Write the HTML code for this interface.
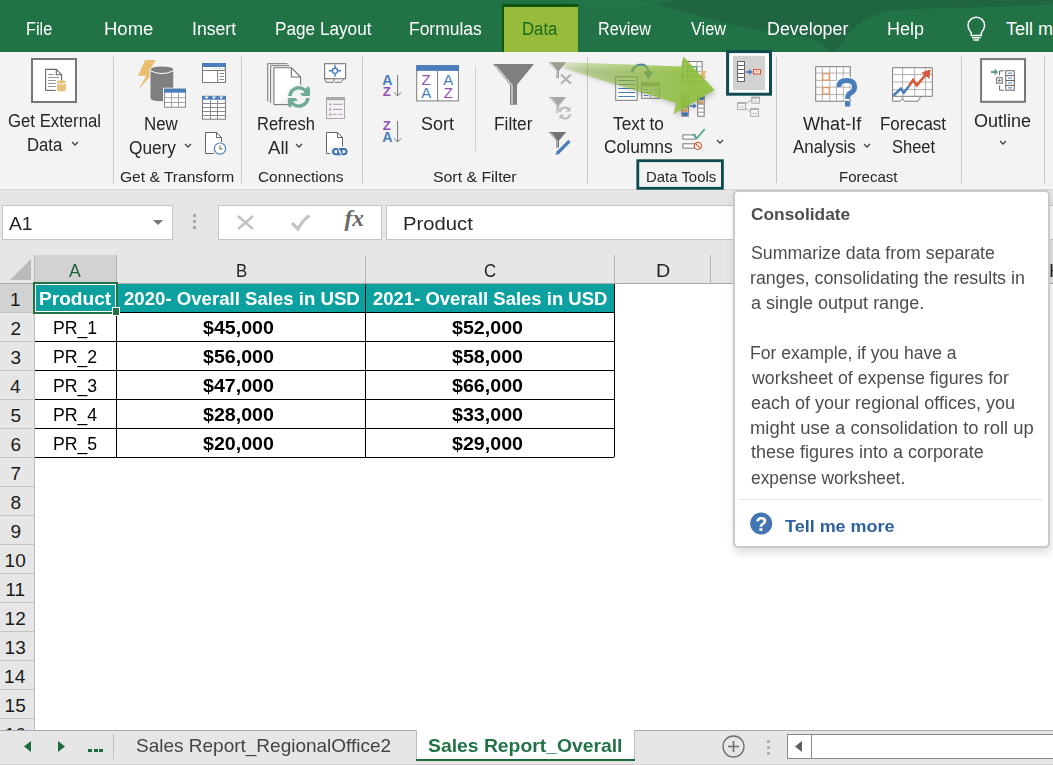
<!DOCTYPE html>
<html><head><meta charset="utf-8"><style>
html,body{margin:0;padding:0;width:1053px;height:765px;overflow:hidden;background:#fff;}
body{position:relative;font-family:"Liberation Sans",sans-serif;}
svg{overflow:visible}
</style></head><body>
<div style="position:absolute;left:0px;top:0px;width:1053px;height:52px;background:#217346"></div>
<svg style="position:absolute;left:0;top:0" width="1053" height="52"><path d="M640 0 C670 8 700 16 740 27 C780 36 815 30 830 52 L836 52 C845 35 860 16 890 11 C950 6 1000 8 1053 4 L1053 0 Z" fill="#1f6542"/><path d="M560 0 C600 12 640 8 680 0 Z" fill="#237848" opacity="0.6"/></svg>
<div style="position:absolute;left:502px;top:4px;width:76px;height:48px;background:#11560f"></div>
<div style="position:absolute;left:504px;top:7px;width:74px;height:45px;background:#97bb3b"></div>
<div style="position:absolute;left:0px;top:52px;width:1053px;height:137px;background:#f3f3f3"></div>
<div style="position:absolute;left:0px;top:188px;width:1053px;height:1px;background:#f8f8f8"></div>
<div style="position:absolute;left:0px;top:189px;width:1053px;height:1px;background:#d4d4d4"></div>
<div style="position:absolute;left:0px;top:190px;width:1053px;height:65px;background:#e6e6e6"></div>
<span style="position:absolute;left:25.60px;top:19.76px;font-size:18px;line-height:1;font-weight:normal;color:#ffffff;white-space:pre;transform-origin:0 0;transform:scaleX(0.9038);">File</span>
<span style="position:absolute;left:103.67px;top:19.76px;font-size:18px;line-height:1;font-weight:normal;color:#ffffff;white-space:pre;transform-origin:0 0;transform:scaleX(1.0276);">Home</span>
<span style="position:absolute;left:191.52px;top:19.76px;font-size:18px;line-height:1;font-weight:normal;color:#ffffff;white-space:pre;transform-origin:0 0;transform:scaleX(0.9792);">Insert</span>
<span style="position:absolute;left:274.55px;top:19.76px;font-size:18px;line-height:1;font-weight:normal;color:#ffffff;white-space:pre;transform-origin:0 0;transform:scaleX(0.9542);">Page Layout</span>
<span style="position:absolute;left:409.33px;top:19.76px;font-size:18px;line-height:1;font-weight:normal;color:#ffffff;white-space:pre;transform-origin:0 0;transform:scaleX(0.9687);">Formulas</span>
<span style="position:absolute;left:522.07px;top:19.76px;font-size:18px;line-height:1;font-weight:normal;color:#1b6a1d;white-space:pre;transform-origin:0 0;transform:scaleX(0.9313);">Data</span>
<span style="position:absolute;left:598.00px;top:19.76px;font-size:18px;line-height:1;font-weight:normal;color:#ffffff;white-space:pre;transform-origin:0 0;transform:scaleX(0.8980);">Review</span>
<span style="position:absolute;left:691.40px;top:19.76px;font-size:18px;line-height:1;font-weight:normal;color:#ffffff;white-space:pre;transform-origin:0 0;transform:scaleX(0.9045);">View</span>
<span style="position:absolute;left:766.81px;top:19.76px;font-size:18px;line-height:1;font-weight:normal;color:#ffffff;white-space:pre;transform-origin:0 0;transform:scaleX(0.9920);">Developer</span>
<span style="position:absolute;left:886.70px;top:19.76px;font-size:18px;line-height:1;font-weight:normal;color:#ffffff;white-space:pre;transform-origin:0 0;transform:scaleX(0.9998);">Help</span>
<span style="position:absolute;left:1005.90px;top:19.76px;font-size:18px;line-height:1;font-weight:normal;color:#ffffff;white-space:pre;transform-origin:0 0;transform:scaleX(1.0000);">Tell me what you want to do</span>
<span style="position:absolute;left:7.50px;top:111.76px;font-size:18px;line-height:1;font-weight:normal;color:#262626;white-space:pre;transform-origin:0 0;transform:scaleX(0.9299);">Get External</span>
<span style="position:absolute;left:27.07px;top:136.26px;font-size:18px;line-height:1;font-weight:normal;color:#262626;white-space:pre;transform-origin:0 0;transform:scaleX(0.9287);">Data</span>
<span style="position:absolute;left:143.86px;top:115.06px;font-size:18px;line-height:1;font-weight:normal;color:#262626;white-space:pre;transform-origin:0 0;transform:scaleX(0.9386);">New</span>
<span style="position:absolute;left:129.00px;top:138.86px;font-size:18px;line-height:1;font-weight:normal;color:#262626;white-space:pre;transform-origin:0 0;transform:scaleX(0.9589);">Query</span>
<span style="position:absolute;left:119.50px;top:170.03px;font-size:14.5px;line-height:1;font-weight:normal;color:#262626;white-space:pre;transform-origin:0 0;transform:scaleX(1.0746);">Get &amp; Transform</span>
<span style="position:absolute;left:257.08px;top:115.06px;font-size:18px;line-height:1;font-weight:normal;color:#262626;white-space:pre;transform-origin:0 0;transform:scaleX(0.9178);">Refresh</span>
<span style="position:absolute;left:268.40px;top:138.86px;font-size:18px;line-height:1;font-weight:normal;color:#262626;white-space:pre;transform-origin:0 0;transform:scaleX(1.0313);">All</span>
<span style="position:absolute;left:258.30px;top:170.03px;font-size:14.5px;line-height:1;font-weight:normal;color:#262626;white-space:pre;transform-origin:0 0;transform:scaleX(1.0603);">Connections</span>
<span style="position:absolute;left:421.30px;top:115.06px;font-size:18px;line-height:1;font-weight:normal;color:#262626;white-space:pre;transform-origin:0 0;transform:scaleX(0.9997);">Sort</span>
<span style="position:absolute;left:432.90px;top:170.03px;font-size:14.5px;line-height:1;font-weight:normal;color:#262626;white-space:pre;transform-origin:0 0;transform:scaleX(1.0924);">Sort &amp; Filter</span>
<span style="position:absolute;left:493.74px;top:115.06px;font-size:18px;line-height:1;font-weight:normal;color:#262626;white-space:pre;transform-origin:0 0;transform:scaleX(0.9614);">Filter</span>
<span style="position:absolute;left:612.50px;top:114.56px;font-size:18px;line-height:1;font-weight:normal;color:#262626;white-space:pre;transform-origin:0 0;transform:scaleX(0.9601);">Text to</span>
<span style="position:absolute;left:603.60px;top:138.46px;font-size:18px;line-height:1;font-weight:normal;color:#262626;white-space:pre;transform-origin:0 0;transform:scaleX(0.9673);">Columns</span>
<span style="position:absolute;left:645.77px;top:170.03px;font-size:14.5px;line-height:1;font-weight:normal;color:#262626;white-space:pre;transform-origin:0 0;transform:scaleX(1.0289);">Data Tools</span>
<span style="position:absolute;left:803.30px;top:114.56px;font-size:18px;line-height:1;font-weight:normal;color:#262626;white-space:pre;transform-origin:0 0;transform:scaleX(1.0033);">What-If</span>
<span style="position:absolute;left:792.50px;top:138.46px;font-size:18px;line-height:1;font-weight:normal;color:#262626;white-space:pre;transform-origin:0 0;transform:scaleX(0.9370);">Analysis</span>
<span style="position:absolute;left:879.86px;top:114.56px;font-size:18px;line-height:1;font-weight:normal;color:#262626;white-space:pre;transform-origin:0 0;transform:scaleX(0.9432);">Forecast</span>
<span style="position:absolute;left:891.60px;top:138.46px;font-size:18px;line-height:1;font-weight:normal;color:#262626;white-space:pre;transform-origin:0 0;transform:scaleX(0.9163);">Sheet</span>
<span style="position:absolute;left:838.56px;top:170.03px;font-size:14.5px;line-height:1;font-weight:normal;color:#262626;white-space:pre;transform-origin:0 0;transform:scaleX(1.0365);">Forecast</span>
<span style="position:absolute;left:974.00px;top:112.06px;font-size:18px;line-height:1;font-weight:normal;color:#262626;white-space:pre;transform-origin:0 0;transform:scaleX(0.9996);">Outline</span>
<svg style="position:absolute;left:71.3px;top:140.5px" width="8" height="6" viewBox="0 0 8 6"><path d="M1 1 L4 4 L7 1" stroke="#444" stroke-width="1.3" fill="none"/></svg>
<svg style="position:absolute;left:184.3px;top:143px" width="8" height="6" viewBox="0 0 8 6"><path d="M1 1 L4 4 L7 1" stroke="#444" stroke-width="1.3" fill="none"/></svg>
<svg style="position:absolute;left:295px;top:143px" width="8" height="6" viewBox="0 0 8 6"><path d="M1 1 L4 4 L7 1" stroke="#444" stroke-width="1.3" fill="none"/></svg>
<svg style="position:absolute;left:716px;top:138.5px" width="8" height="6" viewBox="0 0 8 6"><path d="M1 1 L4 4 L7 1" stroke="#444" stroke-width="1.3" fill="none"/></svg>
<svg style="position:absolute;left:863px;top:143px" width="8" height="6" viewBox="0 0 8 6"><path d="M1 1 L4 4 L7 1" stroke="#444" stroke-width="1.3" fill="none"/></svg>
<svg style="position:absolute;left:999px;top:139.5px" width="8" height="6" viewBox="0 0 8 6"><path d="M1 1 L4 4 L7 1" stroke="#444" stroke-width="1.3" fill="none"/></svg>
<div style="position:absolute;left:113px;top:57px;width:1px;height:126px;background:#c8c8c8"></div>
<div style="position:absolute;left:241px;top:57px;width:1px;height:126px;background:#c8c8c8"></div>
<div style="position:absolute;left:362px;top:57px;width:1px;height:126px;background:#c8c8c8"></div>
<div style="position:absolute;left:587px;top:57px;width:1px;height:126px;background:#c8c8c8"></div>
<div style="position:absolute;left:776px;top:57px;width:1px;height:126px;background:#c8c8c8"></div>
<div style="position:absolute;left:961px;top:57px;width:1px;height:126px;background:#c8c8c8"></div>
<div style="position:absolute;left:1044px;top:57px;width:1px;height:126px;background:#c8c8c8"></div>
<div style="position:absolute;left:475px;top:66px;width:1px;height:85px;background:#d0d0d0"></div>
<svg style="position:absolute;left:0;top:0" width="1053" height="765"><rect x="32" y="59" width="44" height="43" fill="#fff" stroke="#777" stroke-width="2"/><path d="M45.6 90.4 V69.4 H56.3 L61.6 74.7 V82" fill="none" stroke="#666" stroke-width="1.1"/><path d="M45.6 90.4 H55.6" fill="none" stroke="#666" stroke-width="1.1"/><path d="M56.3 69.4 V74.7 H61.6" fill="none" stroke="#666" stroke-width="1.1"/><path d="M48 74.5 H54 M48 77.5 H59 M48 80.5 H55.8 M48 83.5 H55.8 M48 86.5 H55.8" stroke="#888" stroke-width="0.9"/><path d="M57 81.2 Q61.4 79.2 65.9 81.2 V90.4 Q61.4 92.6 57 90.4 Z" fill="#e8c07a"/><path d="M57 83.3 Q61.4 85.2 65.9 83.3" fill="none" stroke="#fff" stroke-width="0.9"/><path d="M145.2 60.1 L155.7 60.1 L149.1 71.5 L154.6 71.5 L138.1 89.9 L146.3 75.8 L138.1 75.8 Z" fill="#e9be6f"/><path d="M150 70 Q150 66 161.9 66 Q173.8 66 173.8 70 V98 Q173.8 101.7 161.9 101.7 Q150 101.7 150 98 Z" fill="#7f7f7f" stroke="#f3f3f3" stroke-width="1"/><path d="M150 70.6 Q161.9 76.6 173.8 70.6" fill="none" stroke="#fff" stroke-width="1"/><rect x="163" y="87.7" width="24" height="21" fill="#f3f3f3"/><rect x="164.5" y="89.2" width="21" height="18" fill="#fff" stroke="#8a8a8a" stroke-width="1"/><rect x="164" y="88.7" width="22" height="4" fill="#4a7ebb"/><path d="M171.5 92.7 V107.2 M178.5 92.7 V107.2 M164.5 97.7 H185.5 M164.5 102.5 H185.5" stroke="#9a9a9a" stroke-width="0.9"/><rect x="202.5" y="63.5" width="23" height="19" fill="#fff" stroke="#7a7a7a" stroke-width="1"/><rect x="202" y="63" width="24" height="4" fill="#4a7ebb"/><path d="M202.5 70.5 H225.5 M217.6 70.5 V82.5" stroke="#7a7a7a" stroke-width="1"/><path d="M214 68.8 H215 M216.5 68.8 H217.5 M219 68.8 H220 M221.5 68.8 H222.5 M224 68.8 H225" stroke="#999" stroke-width="1"/><path d="M219.5 73.5 H224 M219.5 76.5 H224 M219.5 79.5 H224" stroke="#8a8a8a" stroke-width="1"/><rect x="202.5" y="96.4" width="23" height="22.8" fill="#fff" stroke="#7a7a7a" stroke-width="1"/><rect x="202" y="95.9" width="24" height="3.8" fill="#4a7ebb"/><path d="M204.6 96.6 h4 l-2 2.6z M211.9 96.6 h4 l-2 2.6z M219.2 96.6 h4 l-2 2.6z" fill="#fff"/><path d="M210.5 99.7 V119 M217.5 99.7 V119 M202.5 103.5 H225.5 M202.5 107.5 H225.5 M202.5 111.5 H225.5 M202.5 115.5 H225.5" stroke="#8a8a8a" stroke-width="1"/><path d="M205.5 153.5 V132.5 H216.5 L221.5 137.5 V142" fill="#fff" stroke="#666" stroke-width="1"/><path d="M205.5 153.5 H214" stroke="#666" stroke-width="1"/><path d="M216.5 132.5 V137.5 H221.5" fill="none" stroke="#666" stroke-width="1"/><circle cx="220" cy="148.6" r="5.6" fill="#fff" stroke="#4a7ebb" stroke-width="1.2"/><path d="M220 145.5 V149 H222.5" fill="none" stroke="#555" stroke-width="1"/><path d="M267.7 101.2 V63.7 H287.5" fill="none" stroke="#777" stroke-width="1"/><path d="M270.6 103 V65.7 H289.5" fill="none" stroke="#777" stroke-width="1"/><path d="M273.9 104.6 V67.8 H291.4 L300.6 77 V90 " fill="#fff" stroke="#777" stroke-width="1.1"/><path d="M273.9 104.6 H288" stroke="#777" stroke-width="1.1"/><path d="M291.4 67.8 V77 H300.6" fill="none" stroke="#777" stroke-width="1.1"/><circle cx="298.9" cy="96.9" r="12.3" fill="#f3f3f3"/><path d="M288.15 95.9 A10.8 10.8 0 0 1 305.84 88.63 L307.5 85.9 L309.9 88.3 L309.9 95.9 L302.2 95.9 L299.9 93.4 L304.8 92.4 A7.3 7.3 0 0 0 291.7 95.9 Z" fill="#6faa96"/><g transform="rotate(180 298.9 96.9)"><path d="M288.15 95.9 A10.8 10.8 0 0 1 305.84 88.63 L307.5 85.9 L309.9 88.3 L309.9 95.9 L302.2 95.9 L299.9 93.4 L304.8 92.4 A7.3 7.3 0 0 0 291.7 95.9 Z" fill="#6faa96"/></g><rect x="324.6" y="63.7" width="21" height="15" fill="#fff" stroke="#777" stroke-width="1.1"/><path d="M325 78.7 L326 82.3 H333 L334.5 78.7 M334.5 82.3 H341 L344 78.7" fill="none" stroke="#777" stroke-width="1"/><circle cx="335" cy="70.8" r="2.6" fill="#fff" stroke="#4a7ebb" stroke-width="1.4"/><path d="M329 70.8 H332.4 M337.6 70.8 H341 M335 64.8 V68.2 M335 73.4 V76.8" stroke="#4a7ebb" stroke-width="1.4"/><rect x="326.5" y="97.5" width="18" height="21" fill="#f6f1f6" stroke="#a8a8a8" stroke-width="1"/><rect x="326" y="97" width="19" height="3.2" fill="#a8a8a8"/><circle cx="330.2" cy="104.3" r="1.1" fill="#999"/><circle cx="330.2" cy="109.4" r="1.1" fill="none" stroke="#999" stroke-width="0.8"/><circle cx="330.2" cy="114.4" r="1.1" fill="none" stroke="#999" stroke-width="0.8"/><path d="M333 104.3 H342.5 M333 109.4 H342.5 M333 114.4 H336.5 M338.5 114.4 H342.5" stroke="#999" stroke-width="0.9"/><path d="M326.5 153.5 V132.5 H337.5 L342.5 137.5 V147" fill="#fff" stroke="#666" stroke-width="1"/><path d="M326.5 153.5 H330.5" stroke="#666" stroke-width="1"/><path d="M337.5 132.5 V137.5 H342.5" fill="none" stroke="#666" stroke-width="1"/><rect x="330.6" y="146.6" width="18" height="9.6" fill="#f3f3f3"/><rect x="333" y="149" width="8.6" height="5.2" rx="2.6" fill="none" stroke="#3b73b3" stroke-width="2"/><rect x="338" y="149" width="8.6" height="5.2" rx="2.6" fill="none" stroke="#3b73b3" stroke-width="2"/><path d="M337.8 147.5 L341.8 155.8" stroke="#fff" stroke-width="1"/><text x="382.3" y="84.7" font-family="Liberation Sans" font-weight="bold" font-size="14.2" fill="#4a7ebb">A</text><text x="382.8" y="95.9" font-family="Liberation Sans" font-weight="bold" font-size="13.2" fill="#8f4fb8">Z</text><text x="382.8" y="129.6" font-family="Liberation Sans" font-weight="bold" font-size="13.2" fill="#8f4fb8">Z</text><text x="382.3" y="141.9" font-family="Liberation Sans" font-weight="bold" font-size="14.2" fill="#4a7ebb">A</text><path d="M397.6 75 V96 M394 92.2 L397.6 96 L401.2 92.2" fill="none" stroke="#777" stroke-width="1"/><path d="M397.6 121 V142 M394 138.2 L397.6 142 L401.2 138.2" fill="none" stroke="#777" stroke-width="1"/><rect x="416.7" y="65.7" width="41.7" height="35.2" fill="#fff" stroke="#7a7a7a" stroke-width="1"/><rect x="416.2" y="65.2" width="42.7" height="5.7" fill="#4a7ebb"/><path d="M437.6 70.9 V101" stroke="#7a7a7a" stroke-width="1"/><text x="421.6" y="85" font-family="Liberation Sans" font-weight="normal" font-size="15" fill="#8f4fb8">Z</text><text x="421.3" y="98" font-family="Liberation Sans" font-weight="normal" font-size="15" fill="#4a7ebb">A</text><text x="443.3" y="85" font-family="Liberation Sans" font-weight="normal" font-size="15" fill="#4a7ebb">A</text><text x="443.8" y="98" font-family="Liberation Sans" font-weight="normal" font-size="15" fill="#8f4fb8">Z</text><path d="M493 63.9 H534 L517 84.8 V104.8 H510 V84.8 Z" fill="#808080"/><path d="M495.5 65.5 L512 85.3 V103.5" fill="none" stroke="#fff" stroke-width="1"/><path d="M548.8 62.2 H566.1999999999999 L559.0 70.7 V77.9 H556.0 V70.7 Z" fill="#9a9a9a"/><path d="M550.8 63.2 L557.0 71.0 V77.2" fill="none" stroke="#fff" stroke-width="0.8"/><path d="M561 74.5 L571 83.8 M571 74.5 L561 83.8" stroke="#b0b0b0" stroke-width="2"/><path d="M548.8 97 H566.1999999999999 L559.0 105.5 V112.7 H556.0 V105.5 Z" fill="#a8a8a8"/><path d="M550.8 98 L557.0 105.8 V112" fill="none" stroke="#fff" stroke-width="0.8"/><circle cx="565" cy="113" r="7" fill="#f3f3f3"/><path d="M559.8 112 A5.2 5.2 0 0 1 569 109.5 M570.2 114 A5.2 5.2 0 0 1 561 116.5" fill="none" stroke="#bdbdbd" stroke-width="2.2"/><path d="M570.5 106.5 V111.5 H565.5 Z M559.5 119.5 V114.5 H564.5 Z" fill="#bdbdbd"/><path d="M548.8 131.9 H566.1999999999999 L559.0 140.4 V147.6 H556.0 V140.4 Z" fill="#737373"/><path d="M550.8 132.9 L557.0 140.70000000000002 V146.9" fill="none" stroke="#fff" stroke-width="0.8"/><path d="M557.5 153 L569.5 141" stroke="#4a7ebb" stroke-width="3.2"/><path d="M555.5 155.2 L557 150.8 L559.7 153.5 Z" fill="#4a7ebb"/><rect x="615.7" y="76.8" width="21.5" height="23.5" fill="#fff" stroke="#7a7a7a" stroke-width="1"/><path d="M618.2 80.5 H635 M618.2 84.5 H635 M618.2 88.5 H635 M618.2 92.5 H635 M618.2 96.5 H635" stroke="#4a7ebb" stroke-width="1"/><rect x="641.7" y="82.7" width="17.6" height="15.6" fill="#fff" stroke="#7a7a7a" stroke-width="1"/><rect x="641.2" y="82.2" width="18.6" height="4.4" fill="#9a9a9a"/><path d="M650.5 86.6 V98.3 M641.7 92.3 H659.3" stroke="#9a9a9a" stroke-width="0.8"/><path d="M643.5 89.5 H648.5 M652.5 89.5 H657.5 M643.5 95.5 H648.5 M652.5 95.5 H657.5" stroke="#4a7ebb" stroke-width="0.9"/><path d="M631.5 72.5 Q634 64.8 641 64.8 Q647.5 64.8 648.5 72" fill="none" stroke="#4a7ebb" stroke-width="2.4"/><path d="M643.6 71.5 H653.3 L648.5 79.6 Z" fill="#4a7ebb"/><rect x="682.7" y="61.5" width="19.4" height="19.5" fill="#fff" stroke="#7a7a7a" stroke-width="1"/><path d="M687.5 61.5 V81 M697 61.5 V81 M682.7 66.5 H702 M682.7 71.5 H702 M682.7 76.3 H702" stroke="#a0a0a0" stroke-width="0.8"/><rect x="687.8" y="66.8" width="8.8" height="4.4" fill="none" stroke="#4aa58a" stroke-width="1"/><path d="M701.5 71 H706.5 L704.5 74.5 L706.5 78 H701.5 Z" fill="#e9b86a"/><rect x="681.8" y="95.9" width="6.5" height="20.3" fill="#fff" stroke="#7a7a7a" stroke-width="1"/><rect x="682.3" y="96.4" width="5.5" height="3.5" fill="#8cc063"/><rect x="682.3" y="100.5" width="5.5" height="3.5" fill="#d8cc5a"/><rect x="682.3" y="104.5" width="5.5" height="3.5" fill="#8cc063"/><rect x="682.3" y="108.5" width="5.5" height="3.5" fill="#e2b46e"/><rect x="682.3" y="112.3" width="5.5" height="3.6" fill="#3f72b0"/><rect x="697.7" y="95.9" width="6.5" height="20.3" fill="#fff" stroke="#7a7a7a" stroke-width="1"/><rect x="698.2" y="96.4" width="5.5" height="3.5" fill="#3f72b0"/><rect x="698.2" y="100.5" width="5.5" height="3.5" fill="#e2b46e"/><path d="M698 104.2 H704 M698 108.2 H704 M698 112.2 H704" stroke="#7a7a7a" stroke-width="0.8"/><path d="M690 106 H694.5" stroke="#4a7ebb" stroke-width="1.6"/><path d="M693.5 103.3 L696.8 106 L693.5 108.7 Z" fill="#4a7ebb"/><rect x="682.9" y="134.9" width="12.5" height="4.2" fill="#fff" stroke="#7a7a7a" stroke-width="1"/><rect x="682.9" y="143.8" width="12.5" height="4.4" fill="#fff" stroke="#7a7a7a" stroke-width="1"/><path d="M692.8 134 L696.8 138.3 L704.8 129" fill="none" stroke="#5aab8f" stroke-width="1.9"/><circle cx="697.9" cy="145.9" r="3.6" fill="#fff" stroke="#e0573a" stroke-width="1.2"/><path d="M695.5 143.5 L700.3 148.3" stroke="#e0573a" stroke-width="1.2"/><rect x="727.6" y="51.6" width="42.9" height="42.6" fill="#fff" stroke="#0f4a4e" stroke-width="3"/><rect x="732.9" y="55.8" width="32.1" height="34.2" fill="#d2d2d2"/><rect x="737.5" y="61.5" width="7" height="20" fill="#fff" stroke="#666" stroke-width="1"/><path d="M737.5 65.5 H744.5 M737.5 69.5 H744.5 M737.5 73.5 H744.5 M737.5 77.5 H744.5" stroke="#666" stroke-width="1"/><path d="M746 72 H750" stroke="#4a7ebb" stroke-width="1.8"/><path d="M749.2 68.8 L752.6 72 L749.2 75.2 Z" fill="#4a7ebb"/><rect x="753.5" y="69.7" width="7" height="4.2" fill="#fff" stroke="#d9532c" stroke-width="1.1"/><path d="M755.3 71.8 H758.7" stroke="#d9532c" stroke-width="0.7"/><path d="M745.5 104 L751.5 100 M745.5 108 L750.5 112" stroke="#b0b0b0" stroke-width="1"/><rect x="737.5" y="102.5" width="7.899999999999977" height="7.099999999999994" fill="#f6f1f6" stroke="#adadad" stroke-width="1"/><rect x="737" y="102" width="8.899999999999977" height="2" fill="#b0b0b0"/><path d="M739 107.05 H743.9" stroke="#b0b0b0" stroke-width="0.7"/><rect x="751.8" y="97.2" width="7.7000000000000455" height="6.099999999999994" fill="#f6f1f6" stroke="#adadad" stroke-width="1"/><rect x="751.3" y="96.7" width="8.700000000000045" height="2" fill="#b0b0b0"/><path d="M753.3 101.25 H758" stroke="#b0b0b0" stroke-width="0.7"/><rect x="750.7" y="108.5" width="7.7999999999999545" height="7.799999999999997" fill="#f6f1f6" stroke="#adadad" stroke-width="1"/><rect x="750.2" y="108" width="8.799999999999955" height="2" fill="#b0b0b0"/><path d="M752.2 113.4 H757" stroke="#b0b0b0" stroke-width="0.7"/><rect x="815.7" y="66.7" width="34.5" height="34.5" fill="#fff" stroke="#7a7a7a" stroke-width="1"/><path d="M822.3 66.7 V101.2 M829.8 66.7 V101.2 M836.5 66.7 V101.2 M843.3 66.7 V101.2 M815.7 73 H850.2 M815.7 80.4 H850.2 M815.7 87.2 H850.2 M815.7 94.6 H850.2" stroke="#a8a8a8" stroke-width="0.9"/><rect x="822.8" y="73.8" width="6.3" height="6.2" fill="#fff" stroke="#e8883a" stroke-width="1"/><rect x="822.8" y="87.7" width="6.3" height="6.2" fill="#fff" stroke="#e8883a" stroke-width="1"/><path d="M838.8 87 Q838.8 80.5 846.6 80.5 Q854.6 80.5 854.6 87 Q854.6 91 850.5 93 Q847.6 94.5 847.6 99" fill="none" stroke="#f3f3f3" stroke-width="8"/><path d="M838.8 87 Q838.8 80.5 846.6 80.5 Q854.6 80.5 854.6 87 Q854.6 91 850.5 93 Q847.6 94.5 847.6 99" fill="none" stroke="#4a7ebb" stroke-width="5"/><rect x="845" y="101.5" width="5.2" height="5" fill="#4a7ebb"/><path d="M892.6 67.7 H932.3 V96.3 H921 L918 101.2 H904.5 L902.6 98.5 L900.2 101.2 H892.6 Z" fill="#fff" stroke="#7a7a7a" stroke-width="1"/><path d="M892.6 96.3 H921 M902.6 96.3 V98.5" stroke="#7a7a7a" stroke-width="1"/><path d="M902.6 67.7 V96.3 M914.7 67.7 V96.3 M925.4 67.7 V96.3 M892.6 74.6 H932.3 M892.6 82 H932.3 M892.6 89.6 H932.3" stroke="#a8a8a8" stroke-width="0.9"/><path d="M893.3 95.8 L900.7 88.6 L903.8 92.7 L909 86" fill="none" stroke="#4a7ebb" stroke-width="2.6"/><path d="M909 86 L913.1 80 L916.8 85.3 L927.5 72.5" fill="none" stroke="#d6593a" stroke-width="2.6"/><path d="M930.6 69.2 L929.4 79 L921.5 72.4 Z" fill="#d6593a"/><rect x="981.1" y="59.1" width="43.9" height="42.7" fill="#fff" stroke="#777" stroke-width="2"/><path d="M991 72 H995.2" stroke="#5e9e88" stroke-width="2.2"/><path d="M994.5 68.5 L998.2 72 L994.5 75.5 Z" fill="#5e9e88"/><path d="M1003.9 70.8 H999.6 V75.5 M999.6 85.5 V90.2 H1003.9" fill="none" stroke="#666" stroke-width="1"/><rect x="996.6" y="77.8" width="5.6" height="5.4" fill="#fff" stroke="#666" stroke-width="1"/><path d="M997.8 80.5 H1001 M999.4 79 V82" stroke="#666" stroke-width="0.8"/><rect x="1005.8" y="70.7" width="8.5" height="19.5" fill="#fff" stroke="#666" stroke-width="1"/><path d="M1005.8 75.6 H1014.3 M1005.8 80.5 H1014.3 M1005.8 85.4 H1014.3" stroke="#666" stroke-width="1"/><path d="M1008 73.2 H1012.2 M1008 78.1 H1012.2 M1008 83 H1012.2 M1008 87.9 H1012.2" stroke="#4a7ebb" stroke-width="1"/><path d="M971.3 33 Q968 29 968 25.5 A8.3 8.3 0 0 1 984.6 25.5 Q984.6 29 981.3 33 V35.5 H971.3 Z" fill="none" stroke="#fff" stroke-width="1.5"/><path d="M972 37.8 H980.6 M973.5 40 H979" stroke="#fff" stroke-width="1.4"/></svg>
<svg style="position:absolute;left:0;top:0" width="1053" height="765">
<defs>
<linearGradient id="ag" x1="540" y1="0" x2="690" y2="0" gradientUnits="userSpaceOnUse">
<stop offset="0" stop-color="#8fbf3c" stop-opacity="0"/>
<stop offset="0.35" stop-color="#8fbf3c" stop-opacity="0.45"/>
<stop offset="1" stop-color="#8fc13a" stop-opacity="0.88"/>
</linearGradient>
<filter id="sh" x="-20%" y="-20%" width="140%" height="160%"><feGaussianBlur stdDeviation="2.5"/></filter>
</defs>
<path d="M560 63.5 L681.5 66.6 L683.2 56.2 L714.6 90.1 L673.5 114.2 L675.8 103.1 Z" fill="#000" opacity="0.18" transform="translate(1.5,3)" filter="url(#sh)"/>
<path d="M540 61.3 L681.5 66.6 L683.2 56.2 L714.6 90.1 L673.5 114.2 L675.8 103.1 Z" fill="url(#ag)"/>
</svg>
<svg style="position:absolute;left:0;top:0" width="1053" height="200"><rect x="637.8" y="160.7" width="84.6" height="27.6" fill="none" stroke="#0f4a4e" stroke-width="2.8"/></svg>
<div style="position:absolute;left:2px;top:205px;width:171px;height:35px;background:#fff;box-sizing:border-box;border:1px solid #c6c6c6"></div>
<span style="position:absolute;left:9.00px;top:213.92px;font-size:19px;line-height:1;font-weight:normal;color:#262626;white-space:pre;transform-origin:0 0;transform:scaleX(1.0144);">A1</span>
<svg style="position:absolute;left:153px;top:220px" width="10" height="6" viewBox="0 0 10 6"><path d="M0 0 L10 0 L5 5 Z" fill="#777"/></svg>
<div style="position:absolute;left:193px;top:213.5px;width:3px;height:3px;background:#a6a6a6"></div>
<div style="position:absolute;left:193px;top:219.5px;width:3px;height:3px;background:#a6a6a6"></div>
<div style="position:absolute;left:193px;top:225.5px;width:3px;height:3px;background:#a6a6a6"></div>
<div style="position:absolute;left:218px;top:205px;width:164px;height:35px;background:#fff;box-sizing:border-box;border:1px solid #c6c6c6"></div>
<div style="position:absolute;left:386px;top:205px;width:700px;height:35px;background:#fff;box-sizing:border-box;border:1px solid #c6c6c6"></div>
<span style="position:absolute;left:402.93px;top:213.82px;font-size:19px;line-height:1;font-weight:normal;color:#262626;white-space:pre;transform-origin:0 0;transform:scaleX(1.0659);">Product</span>
<svg style="position:absolute;left:237px;top:215px" width="17" height="15" viewBox="0 0 17 15"><path d="M1 1 L16 14 M16 1 L1 14" stroke="#c4c4c4" stroke-width="2.6" fill="none"/></svg>
<svg style="position:absolute;left:291px;top:214px" width="19" height="17" viewBox="0 0 19 17"><path d="M1 9 L7 15 Q11 7 18.5 1.5" stroke="#c4c4c4" stroke-width="3.2" fill="none"/></svg>
<span style="position:absolute;left:344.5px;top:207px;font-family:'Liberation Serif',serif;font-style:italic;font-weight:bold;font-size:23.5px;line-height:1;color:#6a6a6a">fx</span>
<div style="position:absolute;left:0px;top:255px;width:1053px;height:28px;background:#e6e6e6"></div>
<div style="position:absolute;left:34px;top:255px;width:82px;height:28px;background:#d2d2d2"></div>
<div style="position:absolute;left:0px;top:283px;width:34px;height:447px;background:#e6e6e6"></div>
<div style="position:absolute;left:0px;top:284px;width:34px;height:28px;background:#d2d2d2"></div>
<div style="position:absolute;left:0px;top:283px;width:1053px;height:1px;background:#ababab"></div>
<div style="position:absolute;left:34px;top:255px;width:1px;height:475px;background:#bdbdbd"></div>
<div style="position:absolute;left:116px;top:255px;width:1px;height:28px;background:#b4b4b4"></div>
<div style="position:absolute;left:365px;top:255px;width:1px;height:28px;background:#b4b4b4"></div>
<div style="position:absolute;left:614px;top:255px;width:1px;height:28px;background:#b4b4b4"></div>
<div style="position:absolute;left:710px;top:255px;width:1px;height:28px;background:#b4b4b4"></div>
<svg style="position:absolute;left:10px;top:259px" width="21" height="21" viewBox="0 0 21 21"><path d="M21 0 L21 21 L0 21 Z" fill="#b9b9b9"/></svg>
<div style="position:absolute;left:0px;top:312px;width:34px;height:1px;background:#c4c4c4"></div>
<div style="position:absolute;left:0px;top:341px;width:34px;height:1px;background:#c4c4c4"></div>
<div style="position:absolute;left:0px;top:370px;width:34px;height:1px;background:#c4c4c4"></div>
<div style="position:absolute;left:0px;top:399px;width:34px;height:1px;background:#c4c4c4"></div>
<div style="position:absolute;left:0px;top:428px;width:34px;height:1px;background:#c4c4c4"></div>
<div style="position:absolute;left:0px;top:457px;width:34px;height:1px;background:#c4c4c4"></div>
<div style="position:absolute;left:0px;top:486px;width:34px;height:1px;background:#c4c4c4"></div>
<div style="position:absolute;left:0px;top:515px;width:34px;height:1px;background:#c4c4c4"></div>
<div style="position:absolute;left:0px;top:544px;width:34px;height:1px;background:#c4c4c4"></div>
<div style="position:absolute;left:0px;top:573px;width:34px;height:1px;background:#c4c4c4"></div>
<div style="position:absolute;left:0px;top:602px;width:34px;height:1px;background:#c4c4c4"></div>
<div style="position:absolute;left:0px;top:631px;width:34px;height:1px;background:#c4c4c4"></div>
<div style="position:absolute;left:0px;top:660px;width:34px;height:1px;background:#c4c4c4"></div>
<div style="position:absolute;left:0px;top:689px;width:34px;height:1px;background:#c4c4c4"></div>
<div style="position:absolute;left:0px;top:718px;width:34px;height:1px;background:#c4c4c4"></div>
<div style="position:absolute;left:0px;top:747px;width:34px;height:1px;background:#c4c4c4"></div>
<span style="position:absolute;left:69.30px;top:261.94px;font-size:18.5px;line-height:1;font-weight:normal;color:#1d5e3a;white-space:pre;transform-origin:0 0;transform:scaleX(0.9538);">A</span>
<span style="position:absolute;left:235.59px;top:261.94px;font-size:18.5px;line-height:1;font-weight:normal;color:#262626;white-space:pre;transform-origin:0 0;transform:scaleX(0.9091);">B</span>
<span style="position:absolute;left:483.70px;top:261.94px;font-size:18.5px;line-height:1;font-weight:normal;color:#262626;white-space:pre;transform-origin:0 0;transform:scaleX(0.9077);">C</span>
<span style="position:absolute;left:655.93px;top:261.94px;font-size:18.5px;line-height:1;font-weight:normal;color:#262626;white-space:pre;transform-origin:0 0;transform:scaleX(1.0667);">D</span>
<span style="position:absolute;left:1048.91px;top:261.76px;font-size:18px;line-height:1;font-weight:normal;color:#262626;white-space:pre;transform-origin:0 0;transform:scaleX(1.0909);">H</span>
<span style="position:absolute;left:9.90px;top:290.02px;font-size:19px;line-height:1;font-weight:normal;color:#1a1a1a;white-space:pre;transform-origin:0 0;transform:scaleX(1.0000);">1</span>
<span style="position:absolute;left:10.40px;top:319.02px;font-size:19px;line-height:1;font-weight:normal;color:#1a1a1a;white-space:pre;transform-origin:0 0;transform:scaleX(1.0000);">2</span>
<span style="position:absolute;left:10.40px;top:348.02px;font-size:19px;line-height:1;font-weight:normal;color:#1a1a1a;white-space:pre;transform-origin:0 0;transform:scaleX(1.0000);">3</span>
<span style="position:absolute;left:9.90px;top:377.02px;font-size:19px;line-height:1;font-weight:normal;color:#1a1a1a;white-space:pre;transform-origin:0 0;transform:scaleX(1.0000);">4</span>
<span style="position:absolute;left:10.40px;top:406.02px;font-size:19px;line-height:1;font-weight:normal;color:#1a1a1a;white-space:pre;transform-origin:0 0;transform:scaleX(1.0000);">5</span>
<span style="position:absolute;left:10.40px;top:435.02px;font-size:19px;line-height:1;font-weight:normal;color:#1a1a1a;white-space:pre;transform-origin:0 0;transform:scaleX(1.0000);">6</span>
<span style="position:absolute;left:10.40px;top:464.02px;font-size:19px;line-height:1;font-weight:normal;color:#1a1a1a;white-space:pre;transform-origin:0 0;transform:scaleX(1.0000);">7</span>
<span style="position:absolute;left:10.40px;top:493.02px;font-size:19px;line-height:1;font-weight:normal;color:#1a1a1a;white-space:pre;transform-origin:0 0;transform:scaleX(1.0000);">8</span>
<span style="position:absolute;left:10.40px;top:522.02px;font-size:19px;line-height:1;font-weight:normal;color:#1a1a1a;white-space:pre;transform-origin:0 0;transform:scaleX(1.0000);">9</span>
<span style="position:absolute;left:4.62px;top:551.02px;font-size:19px;line-height:1;font-weight:normal;color:#1a1a1a;white-space:pre;transform-origin:0 0;transform:scaleX(1.0000);">10</span>
<span style="position:absolute;left:5.32px;top:580.02px;font-size:19px;line-height:1;font-weight:normal;color:#1a1a1a;white-space:pre;transform-origin:0 0;transform:scaleX(1.0000);">11</span>
<span style="position:absolute;left:4.62px;top:609.02px;font-size:19px;line-height:1;font-weight:normal;color:#1a1a1a;white-space:pre;transform-origin:0 0;transform:scaleX(1.0000);">12</span>
<span style="position:absolute;left:4.62px;top:638.02px;font-size:19px;line-height:1;font-weight:normal;color:#1a1a1a;white-space:pre;transform-origin:0 0;transform:scaleX(1.0000);">13</span>
<span style="position:absolute;left:4.12px;top:667.02px;font-size:19px;line-height:1;font-weight:normal;color:#1a1a1a;white-space:pre;transform-origin:0 0;transform:scaleX(1.0000);">14</span>
<span style="position:absolute;left:4.62px;top:696.02px;font-size:19px;line-height:1;font-weight:normal;color:#1a1a1a;white-space:pre;transform-origin:0 0;transform:scaleX(1.0000);">15</span>
<span style="position:absolute;left:4.62px;top:725.02px;font-size:19px;line-height:1;font-weight:normal;color:#1a1a1a;white-space:pre;transform-origin:0 0;transform:scaleX(1.0000);">16</span>
<div style="position:absolute;left:35px;top:284px;width:579px;height:28px;background:#0ca09f"></div>
<div style="position:absolute;left:35px;top:312px;width:579px;height:1px;background:#000"></div>
<div style="position:absolute;left:35px;top:341px;width:579px;height:1px;background:#000"></div>
<div style="position:absolute;left:35px;top:370px;width:579px;height:1px;background:#000"></div>
<div style="position:absolute;left:35px;top:399px;width:579px;height:1px;background:#000"></div>
<div style="position:absolute;left:35px;top:428px;width:579px;height:1px;background:#000"></div>
<div style="position:absolute;left:35px;top:457px;width:579px;height:1px;background:#000"></div>
<div style="position:absolute;left:116px;top:312px;width:1px;height:145px;background:#000"></div>
<div style="position:absolute;left:365px;top:312px;width:1px;height:145px;background:#000"></div>
<div style="position:absolute;left:614px;top:312px;width:1px;height:145px;background:#000"></div>
<div style="position:absolute;left:365px;top:284px;width:1px;height:28px;background:#000"></div>
<div style="position:absolute;left:614px;top:284px;width:1px;height:28px;background:#000"></div>
<div style="position:absolute;left:33px;top:282px;width:85px;height:32px;box-sizing:border-box;border:2px solid #217346"></div>
<div style="position:absolute;left:35px;top:284px;width:81px;height:28px;box-sizing:border-box;border:1px solid #fff"></div>
<div style="position:absolute;left:113px;top:308px;width:6px;height:7px;background:#217346;outline:1px solid #fff"></div>
<span style="position:absolute;left:38.84px;top:290.26px;font-size:18px;line-height:1;font-weight:bold;color:#ffffff;white-space:pre;transform-origin:0 0;transform:scaleX(1.0611);">Product</span>
<span style="position:absolute;left:123.60px;top:290.16px;font-size:18px;line-height:1;font-weight:bold;color:#ffffff;white-space:pre;transform-origin:0 0;transform:scaleX(1.0337);">2020- Overall Sales in USD</span>
<span style="position:absolute;left:373.40px;top:289.96px;font-size:18px;line-height:1;font-weight:bold;color:#ffffff;white-space:pre;transform-origin:0 0;transform:scaleX(1.0275);">2021- Overall Sales in USD</span>
<span style="position:absolute;left:53.02px;top:318.96px;font-size:18px;line-height:1;font-weight:normal;color:#000;white-space:pre;transform-origin:0 0;transform:scaleX(0.9815);">PR_1</span>
<span style="position:absolute;left:202.60px;top:318.96px;font-size:18px;line-height:1;font-weight:bold;color:#000;white-space:pre;transform-origin:0 0;transform:scaleX(1.0899);">$45,000</span>
<span style="position:absolute;left:451.80px;top:318.96px;font-size:18px;line-height:1;font-weight:bold;color:#000;white-space:pre;transform-origin:0 0;transform:scaleX(1.0914);">$52,000</span>
<span style="position:absolute;left:53.02px;top:347.96px;font-size:18px;line-height:1;font-weight:normal;color:#000;white-space:pre;transform-origin:0 0;transform:scaleX(0.9815);">PR_2</span>
<span style="position:absolute;left:202.60px;top:347.96px;font-size:18px;line-height:1;font-weight:bold;color:#000;white-space:pre;transform-origin:0 0;transform:scaleX(1.0899);">$56,000</span>
<span style="position:absolute;left:451.80px;top:347.96px;font-size:18px;line-height:1;font-weight:bold;color:#000;white-space:pre;transform-origin:0 0;transform:scaleX(1.0914);">$58,000</span>
<span style="position:absolute;left:53.02px;top:376.96px;font-size:18px;line-height:1;font-weight:normal;color:#000;white-space:pre;transform-origin:0 0;transform:scaleX(0.9815);">PR_3</span>
<span style="position:absolute;left:202.60px;top:376.96px;font-size:18px;line-height:1;font-weight:bold;color:#000;white-space:pre;transform-origin:0 0;transform:scaleX(1.0899);">$47,000</span>
<span style="position:absolute;left:451.80px;top:376.96px;font-size:18px;line-height:1;font-weight:bold;color:#000;white-space:pre;transform-origin:0 0;transform:scaleX(1.0914);">$66,000</span>
<span style="position:absolute;left:53.02px;top:405.96px;font-size:18px;line-height:1;font-weight:normal;color:#000;white-space:pre;transform-origin:0 0;transform:scaleX(0.9815);">PR_4</span>
<span style="position:absolute;left:202.60px;top:405.96px;font-size:18px;line-height:1;font-weight:bold;color:#000;white-space:pre;transform-origin:0 0;transform:scaleX(1.0899);">$28,000</span>
<span style="position:absolute;left:451.80px;top:405.96px;font-size:18px;line-height:1;font-weight:bold;color:#000;white-space:pre;transform-origin:0 0;transform:scaleX(1.0914);">$33,000</span>
<span style="position:absolute;left:53.02px;top:434.96px;font-size:18px;line-height:1;font-weight:normal;color:#000;white-space:pre;transform-origin:0 0;transform:scaleX(0.9815);">PR_5</span>
<span style="position:absolute;left:202.60px;top:434.96px;font-size:18px;line-height:1;font-weight:bold;color:#000;white-space:pre;transform-origin:0 0;transform:scaleX(1.0899);">$20,000</span>
<span style="position:absolute;left:451.80px;top:434.96px;font-size:18px;line-height:1;font-weight:bold;color:#000;white-space:pre;transform-origin:0 0;transform:scaleX(1.0914);">$29,000</span>
<div style="position:absolute;left:0px;top:730px;width:1053px;height:35px;background:#e6e6e6"></div>
<div style="position:absolute;left:0px;top:730px;width:1053px;height:1px;background:#ababab"></div>
<div style="position:absolute;left:0px;top:764px;width:1053px;height:1px;background:#d0d0d0"></div>
<svg style="position:absolute;left:24px;top:741px" width="7" height="11" viewBox="0 0 7 11"><path d="M7 0 L0 5.5 L7 11 Z" fill="#1d6b3c"/></svg>
<svg style="position:absolute;left:58px;top:741px" width="7" height="11" viewBox="0 0 7 11"><path d="M0 0 L7 5.5 L0 11 Z" fill="#1d6b3c"/></svg>
<div style="position:absolute;left:88px;top:748.5px;width:4px;height:3.6px;background:#1d6b3c"></div>
<div style="position:absolute;left:93.5px;top:748.5px;width:4px;height:3.6px;background:#1d6b3c"></div>
<div style="position:absolute;left:99px;top:748.5px;width:4px;height:3.6px;background:#1d6b3c"></div>
<div style="position:absolute;left:113px;top:734px;width:1px;height:25px;background:#bdbdbd"></div>
<span style="position:absolute;left:136.20px;top:736.02px;font-size:19px;line-height:1;font-weight:normal;color:#444;white-space:pre;transform-origin:0 0;transform:scaleX(0.9997);">Sales Report_RegionalOffice2</span>
<div style="position:absolute;left:416px;top:730px;width:219px;height:29px;background:#fff;box-sizing:border-box;border-left:1px solid #bdbdbd;border-right:1px solid #bdbdbd"></div>
<div style="position:absolute;left:416px;top:759px;width:219px;height:2px;background:#1d6b3c"></div>
<span style="position:absolute;left:428.40px;top:735.92px;font-size:19px;line-height:1;font-weight:bold;color:#217346;white-space:pre;transform-origin:0 0;transform:scaleX(1.0175);">Sales Report_Overall</span>
<svg style="position:absolute;left:722px;top:735px" width="23" height="23" viewBox="0 0 23 23"><circle cx="11.5" cy="11.5" r="10.5" stroke="#6d6d6d" stroke-width="1.3" fill="none"/><path d="M11.5 6 V17 M6 11.5 H17" stroke="#6d6d6d" stroke-width="1.6"/></svg>
<div style="position:absolute;left:767px;top:740px;width:3px;height:3px;background:#b0b0b0"></div>
<div style="position:absolute;left:767px;top:746px;width:3px;height:3px;background:#b0b0b0"></div>
<div style="position:absolute;left:767px;top:752px;width:3px;height:3px;background:#b0b0b0"></div>
<div style="position:absolute;left:787px;top:734px;width:300px;height:25px;background:#fff;box-sizing:border-box;border:1px solid #8a8a8a"></div>
<div style="position:absolute;left:811px;top:734px;width:1px;height:25px;background:#8a8a8a"></div>
<svg style="position:absolute;left:795px;top:741px" width="7" height="11" viewBox="0 0 7 11"><path d="M7 0 L0 5.5 L7 11 Z" fill="#606060"/></svg>
<div style="position:absolute;left:733px;top:190px;width:317px;height:358px;box-sizing:border-box;border:2px solid #c9c9c9;border-radius:5px;background:#fff;box-shadow:1px 5px 8px rgba(0,0,0,0.13)"></div>
<span style="position:absolute;left:750.60px;top:205.53px;font-size:16.5px;line-height:1;font-weight:bold;color:#4d4d4d;white-space:pre;transform-origin:0 0;transform:scaleX(1.0504);">Consolidate</span>
<span style="position:absolute;left:750.60px;top:245.39px;font-size:17.5px;line-height:1;font-weight:normal;color:#4d4d4d;white-space:pre;transform-origin:0 0;transform:scaleX(1.0154);">Summarize data from separate</span>
<span style="position:absolute;left:749.58px;top:269.89px;font-size:17.5px;line-height:1;font-weight:normal;color:#4d4d4d;white-space:pre;transform-origin:0 0;transform:scaleX(1.0201);">ranges, consolidating the results in</span>
<span style="position:absolute;left:750.60px;top:294.79px;font-size:17.5px;line-height:1;font-weight:normal;color:#4d4d4d;white-space:pre;transform-origin:0 0;transform:scaleX(1.0289);">a single output range.</span>
<span style="position:absolute;left:749.60px;top:345.09px;font-size:17.5px;line-height:1;font-weight:normal;color:#4d4d4d;white-space:pre;transform-origin:0 0;transform:scaleX(1.0015);">For example, if you have a</span>
<span style="position:absolute;left:751.62px;top:370.49px;font-size:17.5px;line-height:1;font-weight:normal;color:#4d4d4d;white-space:pre;transform-origin:0 0;transform:scaleX(1.0158);">worksheet of expense figures for</span>
<span style="position:absolute;left:750.60px;top:395.39px;font-size:17.5px;line-height:1;font-weight:normal;color:#4d4d4d;white-space:pre;transform-origin:0 0;transform:scaleX(1.0291);">each of your regional offices, you</span>
<span style="position:absolute;left:749.55px;top:419.89px;font-size:17.5px;line-height:1;font-weight:normal;color:#4d4d4d;white-space:pre;transform-origin:0 0;transform:scaleX(1.0533);">might use a consolidation to roll up</span>
<span style="position:absolute;left:750.60px;top:444.39px;font-size:17.5px;line-height:1;font-weight:normal;color:#4d4d4d;white-space:pre;transform-origin:0 0;transform:scaleX(1.0273);">these figures into a corporate</span>
<span style="position:absolute;left:750.60px;top:469.89px;font-size:17.5px;line-height:1;font-weight:normal;color:#4d4d4d;white-space:pre;transform-origin:0 0;transform:scaleX(0.9911);">expense worksheet.</span>
<div style="position:absolute;left:740px;top:499px;width:303px;height:1px;background:#e3e3e3"></div>
<svg style="position:absolute;left:750px;top:512px" width="23" height="23" viewBox="0 0 23 23"><circle cx="11.2" cy="11.5" r="11" fill="#4275b2"/><text x="11.2" y="19" text-anchor="middle" font-family="Liberation Sans" font-weight="bold" font-size="19.5" fill="#fff">?</text></svg>
<span style="position:absolute;left:785.30px;top:517.61px;font-size:17px;line-height:1;font-weight:bold;color:#2e5f9e;white-space:pre;transform-origin:0 0;transform:scaleX(1.0576);">Tell me more</span>
</body></html>
